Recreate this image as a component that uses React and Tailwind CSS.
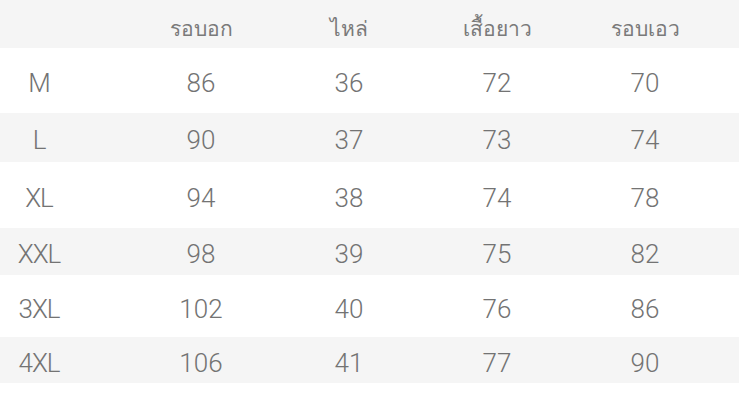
const headers = ['รอบอก', 'ไหล่', 'เสื้อยาว', 'รอบเอว']

const rows = [
  { size: 'M', values: ['86', '36', '72', '70'], cls: 'h-[65px] bg-white' },
  { size: 'L', values: ['90', '37', '73', '74'], cls: 'h-[49px] bg-[#f5f5f5]' },
  { size: 'XL', values: ['94', '38', '74', '78'], cls: 'h-[66px] bg-white' },
  { size: 'XXL', values: ['98', '39', '75', '82'], cls: 'h-[47px] bg-[#f5f5f5]' },
  { size: '3XL', values: ['102', '40', '76', '86'], cls: 'h-[62px] bg-white' },
  { size: '4XL', values: ['106', '41', '77', '90'], cls: 'h-[46px] bg-[#f5f5f5]' },
]

export default function App() {
  return (
    <div className="h-[408px] w-[739px] overflow-hidden bg-white text-[#737373] font-['Roboto','Noto_Sans',sans-serif]">
      <div className="flex h-[48px] items-center bg-[#f5f5f5] pt-[12px] text-[21px] font-light text-[#7a7a7a]">
        <div className="mr-[49px] w-[78px]" />
        {headers.map((h) => (
          <div key={h} className="w-[148px] text-center">
            {h}
          </div>
        ))}
      </div>

      {rows.map((row) => (
        <div key={row.size} className={`flex items-center pt-[6px] text-[26px] font-light ${row.cls}`}>
          <div className="mr-[49px] w-[78px] text-center tracking-[-1px]">{row.size}</div>
          {row.values.map((v, i) => (
            <div key={i} className="w-[148px] text-center">
              {v}
            </div>
          ))}
        </div>
      ))}
    </div>
  )
}
